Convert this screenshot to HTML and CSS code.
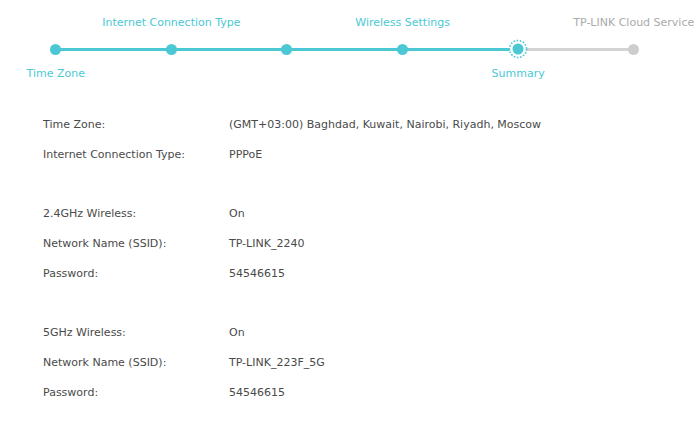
FILE: index.html
```html
<!DOCTYPE html>
<html lang="en">
<head>
    <meta charset="UTF-8">
    <title>Quick Setup - Summary</title>
    <link rel="stylesheet" href="styles.css">
</head>
<body>
    <div class="stepper">
        <div class="step done">
            <div class="label-top"></div>
            <div class="track"><span class="dot"></span></div>
            <div class="label-bottom">Time Zone</div>
        </div>
        <div class="step done">
            <div class="label-top">Internet Connection Type</div>
            <div class="track"><span class="dot"></span></div>
            <div class="label-bottom"></div>
        </div>
        <div class="step done">
            <div class="label-top"></div>
            <div class="track"><span class="dot"></span></div>
            <div class="label-bottom"></div>
        </div>
        <div class="step done">
            <div class="label-top">Wireless Settings</div>
            <div class="track"><span class="dot"></span></div>
            <div class="label-bottom"></div>
        </div>
        <div class="step current">
            <div class="label-top"></div>
            <div class="track">
                <svg class="ring" width="20" height="20" viewBox="0 0 20 20">
                    <circle cx="10" cy="10" r="8.5" fill="#fff" stroke="#4bc8d4" stroke-width="1.6" stroke-dasharray="1.6 1.6"/>
                    <circle cx="10" cy="10" r="5.5" fill="#4bc8d4"/>
                </svg>
            </div>
            <div class="label-bottom">Summary</div>
        </div>
        <div class="step todo last">
            <div class="label-top">TP-LINK Cloud Service</div>
            <div class="track"><span class="dot"></span></div>
            <div class="label-bottom"></div>
        </div>
    </div>

    <div class="summary">
        <div class="group">
            <div class="row"><span class="key">Time Zone:</span><span class="val">(GMT+03:00) Baghdad, Kuwait, Nairobi, Riyadh, Moscow</span></div>
            <div class="row"><span class="key">Internet Connection Type:</span><span class="val">PPPoE</span></div>
        </div>
        <div class="group">
            <div class="row"><span class="key">2.4GHz Wireless:</span><span class="val">On</span></div>
            <div class="row"><span class="key">Network Name (SSID):</span><span class="val">TP-LINK_2240</span></div>
            <div class="row"><span class="key">Password:</span><span class="val">54546615</span></div>
        </div>
        <div class="group">
            <div class="row"><span class="key">5GHz Wireless:</span><span class="val">On</span></div>
            <div class="row"><span class="key">Network Name (SSID):</span><span class="val">TP-LINK_223F_5G</span></div>
            <div class="row"><span class="key">Password:</span><span class="val">54546615</span></div>
        </div>
    </div>
</body>
</html>
```

FILE: styles.css
```css
body {
    margin: 0;
    padding: 0;
    background-color: #fff;
    font-family: 'DejaVu Sans', Verdana, sans-serif;
    font-size: 11px;
    color: #4a4a4a;
}

.stepper {
    display: flex;
    width: 694px;
    margin-left: -2px;
    padding-top: 16px;
}

.step {
    width: 115.6px;
    flex: none;
    display: flex;
    flex-direction: column;
    align-items: center;
    color: #4bc8d4;
}

.step.todo {
    color: #aaa;
}

.label-top,
.label-bottom {
    height: 14px;
    line-height: 14px;
    white-space: nowrap;
}

.track {
    position: relative;
    width: 100%;
    height: 22px;
    margin: 8px 0 7px;
    display: flex;
    align-items: center;
    justify-content: center;
}

.track::after {
    content: '';
    position: absolute;
    left: 50%;
    width: 100%;
    top: 10px;
    height: 3px;
    background-color: #4bc8d4;
}

.step.current .track::after {
    background-color: #d3d3d3;
}

.step.last .track::after {
    display: none;
}

.dot,
.ring {
    position: relative;
    z-index: 1;
}

.dot {
    width: 11px;
    height: 11px;
    border-radius: 50%;
    background-color: #4bc8d4;
}

.step.todo .dot {
    background-color: #cdcdcd;
}

.summary {
    padding: 29px 0 0 43px;
}

.group {
    margin-bottom: 29px;
}

.row {
    display: flex;
    height: 30px;
    line-height: 30px;
}

.key {
    width: 186px;
    flex: none;
}
```
